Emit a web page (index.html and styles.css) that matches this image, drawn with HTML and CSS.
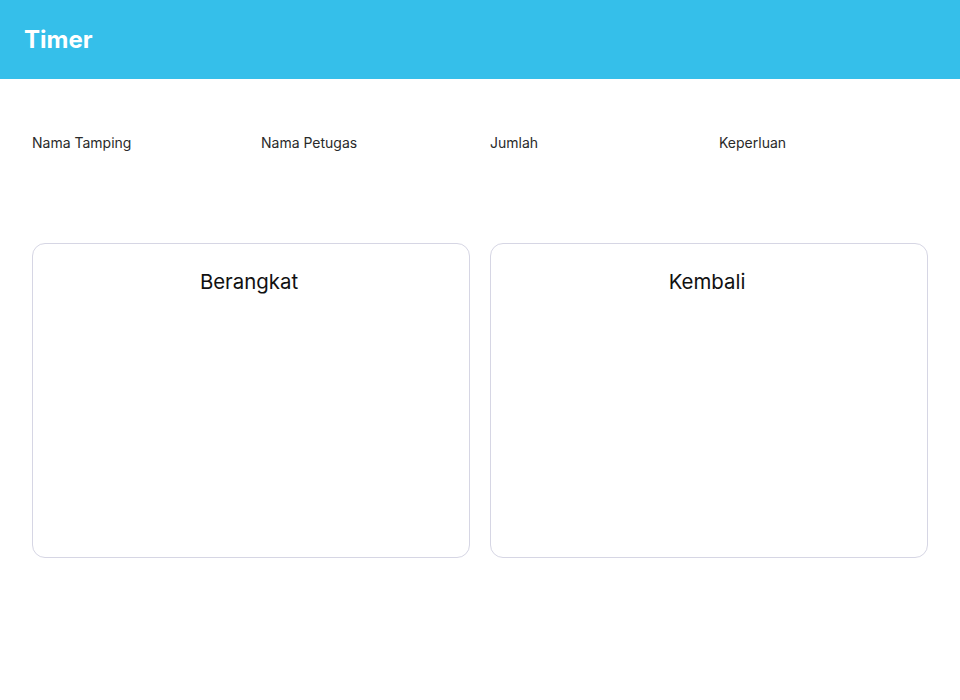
FILE: index.html
```html
<!DOCTYPE html>
<html lang="id">
<head>
<meta charset="utf-8">
<title>Timer</title>
<link rel="stylesheet" href="styles.css">
</head>
<body>
<header class="topbar">
  <h1 class="title">Timer</h1>
</header>
<main class="content">
  <div class="fields">
    <div class="field">Nama Tamping</div>
    <div class="field">Nama Petugas</div>
    <div class="field">Jumlah</div>
    <div class="field">Keperluan</div>
  </div>
  <div class="cards">
    <section class="card"><h2 class="card-title">Berangkat</h2></section>
    <section class="card"><h2 class="card-title">Kembali</h2></section>
  </div>
</main>
</body>
</html>
```
FILE: styles.css
```css
* { box-sizing: border-box; }
html, body { margin: 0; padding: 0; background: #fff; }
body { font-family: Inter, "Noto Sans", sans-serif; color: #222; }
.topbar {
  height: 79px;
  background: #35bfea;
  display: flex;
  align-items: center;
  padding: 0 24px;
}
.title {
  margin: 0;
  color: #fff;
  font-size: 24px;
  font-weight: 700;
  line-height: 1;
  padding-top: 1px;
}
.content { padding: 55px 32px 0; }
.fields {
  display: grid;
  grid-template-columns: repeat(4, 1fr);
  gap: 20px;
  font-size: 14px;
  line-height: 18px;
  color: #2a2a2a;
}
.cards {
  margin-top: 91px;
  display: grid;
  grid-template-columns: 1fr 1fr;
  gap: 20px;
}
.card {
  height: 315px;
  border: 1px solid #d6d6e4;
  border-radius: 13px;
  padding-top: 26px;
}
.card-title {
  margin: 0;
  text-align: center;
  font-size: 20.4px;
  font-weight: 400;
  line-height: 24px;
  color: #111;
  padding-right: 4px;
}
```
